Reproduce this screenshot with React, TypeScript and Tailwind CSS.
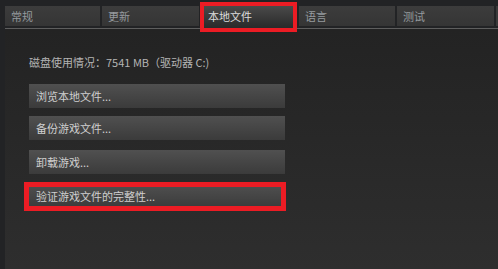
import React from "react";

const tabs = [
  { label: "常规", w: "w-[95px]" },
  { label: "更新", w: "w-[97px]" },
  { label: "本地文件", w: "w-[95px]", active: true },
  { label: "语言", w: "w-[96px]" },
  { label: "测试", w: "w-[97px]" },
];

const actions = ["浏览本地文件...", "备份游戏文件...", "卸载游戏..."];

const App = () => {
  return (
    <div
      className="w-[498px] h-[269px] overflow-hidden bg-[#222325] flex flex-col text-[11px]"
      style={{ fontFamily: '"Noto Sans CJK SC", "Liberation Sans", sans-serif' }}
    >
      {/* tab bar */}
      <div className="flex items-start gap-[2px] pl-[5px] pt-[6px] h-[28px] shrink-0">
        {tabs.map((t) =>
          t.active ? (
            <div key={t.label} className={`relative ${t.w} h-[22px] ml-[1px]`}>
              <div className="h-full bg-gradient-to-b from-[#4a4a4a] to-[#2a2a2a] pl-[6px] pt-[2px] text-[#dcdcdc] leading-[16px]">
                {t.label}
              </div>
              <div className="absolute left-[-2px] top-[-4px] w-[97px] h-[30px] border-4 border-[#ec1c24]" />
            </div>
          ) : (
            <div
              key={t.label}
              className={`${t.w} h-[20px] bg-gradient-to-b from-[#3c3c3c] to-[#353535] pl-[6px] pt-[2px] text-[#959a9e] leading-[16px]`}
            >
              {t.label}
            </div>
          )
        )}
        <div className="flex-1 h-[20px] bg-[#3a3a3a]" />
      </div>

      {/* panel */}
      <div className="flex flex-1">
        <div className="w-[5px] bg-[#222325]" />
        <div className="flex-1 flex flex-col">
          <div className="h-[1px] bg-[#5e5e5e]" />
          <div className="flex-1 bg-gradient-to-b from-[#232323] to-[#2e2e2e] pl-[24px] pt-[25px]">
            <div className="text-[#b4b4b4] leading-[16px] mb-[14px]">
              磁盘使用情况：7541 MB（驱动器 C:)
            </div>
            <div className="flex flex-col w-[256px]">
              {actions.map((a, i) => (
                <div
                  key={a}
                  className={`h-[24px] bg-gradient-to-b from-[#505050] to-[#3b3b3b] pl-[7px] flex items-center text-[#cfcfcf] ${
                    i === 0 ? "mb-[8px]" : "mb-[10px]"
                  }`}
                >
                  {a}
                </div>
              ))}
              <div className="relative h-[24px] bg-gradient-to-b from-[#505050] to-[#3b3b3b] pl-[7px] flex items-center text-[#cfcfcf]">
                验证游戏文件的完整性...
                <div className="absolute left-[-5px] top-[-2px] w-[262px] h-[29px] border-[5px] border-[#ec1c24]" />
              </div>
            </div>
          </div>
        </div>
      </div>
    </div>
  );
};

export default App;
